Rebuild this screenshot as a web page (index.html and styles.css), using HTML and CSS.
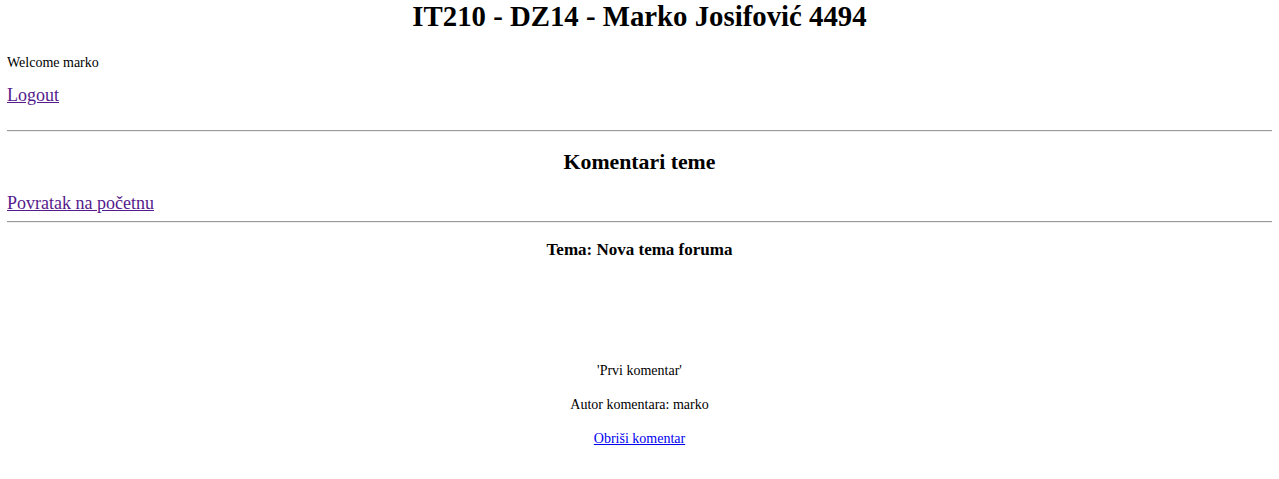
FILE: index.html
```html
<!DOCTYPE html>
<html lang="sr">
<head>
<meta charset="utf-8">
<title>Komentari teme</title>
<link rel="stylesheet" href="styles.css">
</head>
<body>
<h1 class="title">IT210 - DZ14 - Marko Josifović 4494</h1>
<p class="welcome">Welcome marko</p>
<p class="nav-link logout"><a href="#" class="visited">Logout</a></p>
<hr class="rule rule-top">
<h2 class="section-title">Komentari teme</h2>
<p class="nav-link back"><a href="#" class="visited">Povratak na početnu</a></p>
<hr class="rule rule-bottom">
<h4 class="topic">Tema: Nova tema foruma</h4>
<div class="comment">
  <p class="comment-text">'Prvi komentar'</p>
  <p class="comment-line">Autor komentara: marko</p>
  <p class="comment-line"><a href="#" class="fresh">Obriši komentar</a></p>
</div>
</body>
</html>
```
FILE: styles.css
```css
html, body {
  background: #ffffff;
}
body {
  margin: 0 7px;
  font-family: "Liberation Serif", "Times New Roman", serif;
  color: #000000;
}
.title {
  margin: 0;
  font-size: 28.8px;
  line-height: 33px;
  font-weight: bold;
  text-align: center;
}
.welcome {
  margin: 22px 0 0;
  font-size: 14px;
  line-height: 16px;
}
.nav-link {
  margin: 0;
  font-size: 18px;
  line-height: 20px;
}
.logout {
  margin-top: 14px;
}
.back {
  margin-top: 18px;
}
.visited {
  color: #551a8b;
  text-decoration: underline;
}
.fresh {
  color: #0000ee;
  text-decoration: underline;
}
.rule {
  height: 0;
  margin: 0;
  border: 0;
  border-top: 1px solid #9a9a9a;
  border-bottom: 1px solid #eeeeee;
}
.rule-top {
  margin-top: 25px;
}
.rule-bottom {
  margin-top: 8px;
}
.section-title {
  margin: 17px 0 0;
  font-size: 21.8px;
  line-height: 26px;
  font-weight: bold;
  text-align: center;
}
.topic {
  margin: 17px 0 0;
  font-size: 17px;
  line-height: 20px;
  font-weight: bold;
  text-align: center;
}
.comment {
  margin-top: 103px;
  display: flex;
  flex-direction: column;
  gap: 18px;
  text-align: center;
  font-size: 14px;
  line-height: 16px;
}
.comment p {
  margin: 0;
}
```
